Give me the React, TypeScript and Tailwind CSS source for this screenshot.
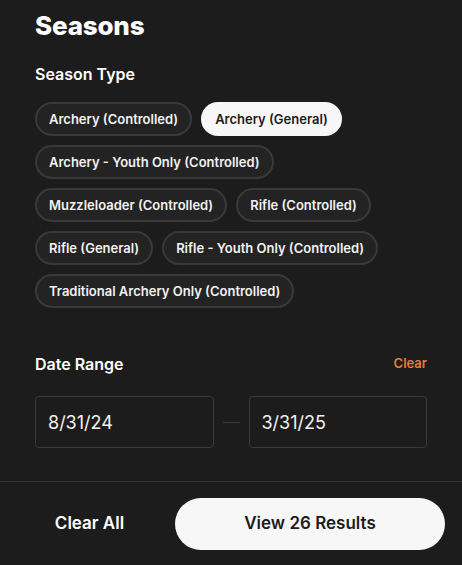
const seasonTypes = [
  { label: "Archery (Controlled)", selected: false },
  { label: "Archery (General)", selected: true },
  { label: "Archery - Youth Only (Controlled)", selected: false },
  { label: "Muzzleloader (Controlled)", selected: false },
  { label: "Rifle (Controlled)", selected: false },
  { label: "Rifle (General)", selected: false },
  { label: "Rifle - Youth Only (Controlled)", selected: false },
  { label: "Traditional Archery Only (Controlled)", selected: false },
];

function Chip({ label, selected }: { label: string; selected: boolean }) {
  return (
    <button
      type="button"
      className={`h-[34px] px-[12px] rounded-full border-2 text-[13px] font-semibold leading-none whitespace-nowrap ${
        selected
          ? "bg-[#f7f7f7] border-[#f7f7f7] text-[#1c1c1c]"
          : "bg-[#232323] border-[#393939] text-[#f2f2f2]"
      }`}
    >
      {label}
    </button>
  );
}

function DateInput({ value }: { value: string }) {
  return (
    <div className="flex-1 h-[52px] rounded-[4px] border border-[#3a3a3a] flex items-center px-[12px] text-[18px] text-[#f2f2f2]">
      {value}
    </div>
  );
}

export default function App() {
  return (
    <div
      className="w-[462px] h-[565px] bg-[#1c1c1c] text-white flex flex-col overflow-hidden"
      style={{ fontFamily: "Inter, 'Noto Sans', sans-serif" }}
    >
      <div className="px-[35px] pt-[9px] flex-1">
        <h1 className="text-[26px] font-extrabold leading-[34px] tracking-[-0.2px]">Seasons</h1>
        <h2 className="mt-[21px] text-[16px] font-semibold leading-[20px]">Season Type</h2>
        <div className="mt-[18px] flex flex-wrap gap-x-[9px] gap-y-[9px]">
          {seasonTypes.map((s) => (
            <Chip key={s.label} label={s.label} selected={s.selected} />
          ))}
        </div>

        <div className="mt-[46px] flex items-center justify-between">
          <h2 className="text-[16px] font-semibold leading-[20px]">Date Range</h2>
          <span className="text-[13px] font-semibold text-[#e67e3a]">Clear</span>
        </div>
        <div className="mt-[22px] flex items-center gap-[9px]">
          <DateInput value="8/31/24" />
          <div className="w-[17px] h-px bg-[#3a3a3a]" />
          <DateInput value="3/31/25" />
        </div>
      </div>

      <div className="border-t border-[#333333] h-[84px] flex items-center pl-[14px] pr-[17px] gap-[10px]">
        <button type="button" className="w-[151px] text-[17px] font-semibold text-white text-center">
          Clear All
        </button>
        <button
          type="button"
          className="flex-1 h-[52px] rounded-full bg-[#f7f7f7] text-[#1c1c1c] text-[17px] font-semibold"
        >
          View 26 Results
        </button>
      </div>
    </div>
  );
}
